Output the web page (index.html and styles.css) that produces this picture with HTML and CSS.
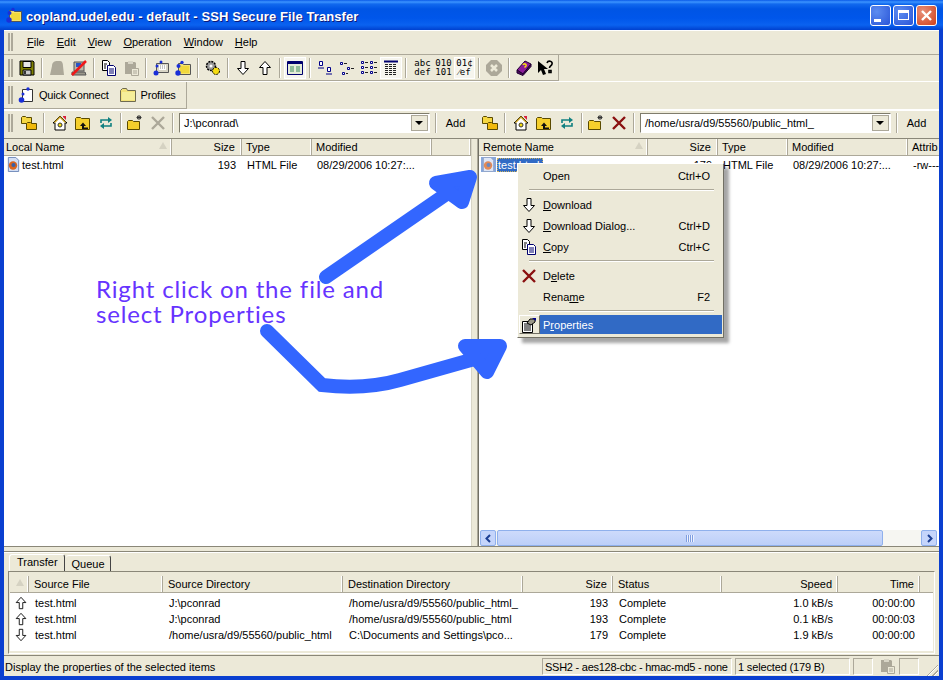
FILE: index.html
```html
<!DOCTYPE html>
<html lang="en">
<head>
    <meta charset="UTF-8">
    <title>copland.udel.edu - default - SSH Secure File Transfer</title>
    <link rel="stylesheet" href="styles.css">
</head>
<body>
    <svg class="defs" width="0" height="0">
        <defs>
            <symbol id="i-file" viewBox="0 0 16 16"><path d="M2.500.5h8l3 3v12h-11z" fill="#d3def4" stroke="#6d86b8"/><circle cx="7.500" cy="9" r="4.500" fill="#d9641f"/><circle cx="8" cy="8.500" r="2.200" fill="#3a5fa8"/></symbol>
            <symbol id="i-save" viewBox="0 0 16 16"><path d="M1 1h13l1 1v13H1z" fill="#808000" stroke="#000"/><path d="M4 1.500h8v6H4z" fill="#e8e8e8" stroke="#000"/><path d="M4 10h8v5H4z" fill="#c8c8c8" stroke="#000"/><path d="M5 11h2v3H5z" fill="#333"/></symbol>
            <symbol id="i-ghost" viewBox="0 0 16 16"><path d="M1 15 3 6c0-4 3-5 5-5h3c2 0 3 2 3 5l1 9z" fill="#aca899"/></symbol>
            <symbol id="i-disc" viewBox="0 0 16 16"><path d="M3 2h10v9H3z" fill="#b9b6a8" stroke="#555"/><path d="M5 3h5v4H5z" fill="#2a55c8"/><path d="M1 12h13l1 3H1z" fill="#9a978a" stroke="#555"/><path d="M1 15 15 1" stroke="#f01818" stroke-width="2.500"/></symbol>
            <symbol id="i-copy" viewBox="0 0 16 16"><path d="M1.500.5h5l2 2v8h-7z" fill="#fff" stroke="#000"/><path d="M6.500 5.500h6l2 2v8h-8z" fill="#fff" stroke="#00006e"/><path d="M3 4h3M3 6h2M3 8h2" stroke="#000"/><path d="M8 9h5M8 11h5M8 13h5" stroke="#00006e"/></symbol>
            <symbol id="i-paste" viewBox="0 0 16 16"><path d="M2 2h10l1 1v11H2z" fill="#aca899"/><path d="M5 1h5v3H5z" fill="#d8d5c6"/><path d="M8.500 8.500h7v7h-7z" fill="#ece9d8" stroke="#aca899"/><path d="M10 11h4M10 13h4" stroke="#aca899"/></symbol>
            <symbol id="i-term" viewBox="0 0 16 16"><path d="M3.500 3.500h12v9h-12z" fill="#d8d5c6" stroke="#555"/><path d="M6 5h7v5H6z" fill="#fff"/><path d="M7 6h1M9 6h1M11 6h1M7 8h1M9 8h1M11 8h1" stroke="#888"/><circle cx="3" cy="13" r="2.500" fill="#1a2fd8"/><circle cx="4" cy="6" r="1.500" fill="#1a2fd8"/><circle cx="8" cy="2" r="1.500" fill="#1a2fd8"/></symbol>
            <symbol id="i-prof" viewBox="0 0 16 16"><path d="M3.500 3.500h4l1 1h7v10h-12z" fill="#f6e36c" stroke="#555"/><path d="M5 6h9v7H5z" fill="#f1d83c"/><circle cx="3" cy="13" r="2.700" fill="#1a2fd8"/><circle cx="3.500" cy="6" r="2" fill="#1a2fd8"/><circle cx="7" cy="2.500" r="1.700" fill="#1a2fd8"/></symbol>
            <symbol id="i-gears" viewBox="0 0 16 16"><circle cx="6" cy="6" r="4.500" fill="#999" stroke="#000" stroke-width="1.500" stroke-dasharray="2 1"/><circle cx="6" cy="6" r="1.500" fill="#fff"/><circle cx="11" cy="11" r="3.500" fill="#f5dc10" stroke="#000" stroke-dasharray="2 1"/></symbol>
            <symbol id="i-down" viewBox="0 0 16 16"><path d="M6 1.500h4v7h3.500L8 14.500 2.500 8.500H6z" fill="#fff" stroke="#000"/></symbol>
            <symbol id="i-up" viewBox="0 0 16 16"><path d="M6 14.500h4v-7h3.500L8 1.500 2.500 7.500H6z" fill="#fff" stroke="#000"/></symbol>
            <symbol id="i-win" viewBox="0 0 16 16"><path d="M.5 1.500h15v13H.5z" fill="#e4ecd8" stroke="#00006e"/><path d="M1 2h14v2H1z" fill="#00006e"/><path d="M3 7h4M9 7h4M3 9h4M9 9h4M3 11h4M9 11h4" stroke="#3c8a5a"/></symbol>
            <symbol id="i-large" viewBox="0 0 16 16"><g fill="#fff" stroke="#00008a"><path d="M2.500 1.500h3v4h-3zM10.500 7.500h3v4h-3z"/></g><path d="M1 8h6M9 14h6" stroke="#00008a"/></symbol>
            <symbol id="i-small" viewBox="0 0 16 16"><g fill="#fff" stroke="#00008a"><path d="M1.500 2.500h2v2h-2zM8.500 7.500h2v2h-2zM3.500 12.500h2v2h-2z"/></g><path d="M5 3.500h3M12 8.500h3M7 13.500h2" stroke="#222"/></symbol>
            <symbol id="i-list" viewBox="0 0 16 16"><g fill="#fff" stroke="#00008a"><path d="M.5 1.500h2v2h-2zM9.500 1.500h2v2h-2zM.5 6.500h2v2h-2zM9.500 6.500h2v2h-2zM.5 11.500h2v2h-2zM9.500 11.500h2v2h-2z"/></g><path d="M4 2.500h3M13 2.500h3M4 7.500h3M13 7.500h3M4 12.500h3M13 12.500h3" stroke="#222"/></symbol>
            <symbol id="i-detail" viewBox="0 0 16 16"><path d="M1 1.500h14" stroke="#00006e" stroke-width="2"/><path d="M2 4.500h12M2 6.500h12M2 8.500h12M2 10.500h12M2 12.500h12M2 14.500h12" stroke="#222" stroke-dasharray="3 1"/></symbol>
            <symbol id="i-stop" viewBox="0 0 16 16"><path d="M5 0h6l5 5v6l-5 5H5l-5-5V5z" fill="#aca899"/><path d="m5 5 6 6m0-6-6 6" stroke="#ece9d8" stroke-width="2.500"/></symbol>
            <symbol id="i-book" viewBox="0 0 16 16"><path d="M1 10 9 1l6 3-8 10z" fill="#8a1a9a" stroke="#200030"/><path d="M1 10v3l6 2.500 8-9V4l-8 10z" fill="#4a0a5a" stroke="#200030"/><path d="M7 5c1-2 4-1 3 1L8.500 7.500" stroke="#f5dc10" stroke-width="1.500" fill="none"/></symbol>
            <symbol id="i-help" viewBox="0 0 16 16"><path d="M0 1v12l3-3 2 5 3-1-2-5h4z" fill="#000"/><path d="M9 3c1-3 6-2 5 1-.5 2-2.500 2-2.500 4M11 10.500h2v2h-2z" stroke="#000" stroke-width="1.600" fill="none"/></symbol>
            <symbol id="i-qc" viewBox="0 0 16 16"><path d="M4.500 2.500h10v12h-10z" fill="#fff" stroke="#333"/><circle cx="3.500" cy="13" r="2.800" fill="#1a2fd8"/><circle cx="5" cy="7" r="1.500" fill="#1a2fd8"/><circle cx="10" cy="2" r="1.700" fill="#1a2fd8"/></symbol>
            <symbol id="i-folder" viewBox="0 0 16 16"><path d="M.5 3.500l2-2h4l1 2h8v11H.5z" fill="#f3e27a" stroke="#6e6a50"/><path d="M2 5h13v8H2z" fill="#f5ee9a"/></symbol>
            <symbol id="i-sibling" viewBox="0 0 16 16"><path d="M.5 2.500l1-1h3l1 1h5v6h-10z" fill="#f5d742" stroke="#5a4a00"/><path d="M5.500 8.500l1-1h3l1 1h5v6h-10z" fill="#f0b90c" stroke="#5a4a00"/></symbol>
            <symbol id="i-home" viewBox="0 0 16 16"><path d="M8 1 1 8h2v7h10V8h2z" fill="#fff" stroke="#000"/><path d="M11 1h3v4l-3-3z" fill="#d8203c"/><path d="M8 1 2 7l1 1 5-5 5 5 1-1z" fill="#c8a020"/><circle cx="8" cy="10" r="2" fill="#f5dc10" stroke="#333"/></symbol>
            <symbol id="i-updir" viewBox="0 0 16 16"><path d="M.5 3.500l1-1h4l1 1h8v11H.5z" fill="#f5cf2c" stroke="#5a4a00"/><path d="M5 11 8 7.500 11 11H9v1.500h4V14H7v-3z" fill="#111"/></symbol>
            <symbol id="i-refresh" viewBox="0 0 16 16"><path d="M3 8V5h8" fill="none" stroke="#108080" stroke-width="1.600"/><path d="m10 2 4 3-4 3z" fill="#108080"/><path d="M13 8v3H5" fill="none" stroke="#108080" stroke-width="1.600"/><path d="m6 8-4 3 4 3z" fill="#108080"/></symbol>
            <symbol id="i-newdir" viewBox="0 0 16 16"><path d="M.5 6.500l1-1h4l1 1h6v8H.5z" fill="#f5cf2c" stroke="#5a4a00"/><path d="M12 0v5M9.500 2.500h5M10 1l4 3m0-3-4 3" stroke="#333"/></symbol>
            <symbol id="i-x" viewBox="0 0 16 16"><path d="m2 2 12 12m0-12L2 14" stroke="currentColor" stroke-width="2.400"/></symbol>
            <symbol id="i-props" viewBox="0 0 16 16"><path d="M1.500 4.500h10v11h-10z" fill="#fff" stroke="#000"/><path d="M3 7h7M3 9h7M3 11h7M3 13h7" stroke="#000"/><path d="M6 6 9 2h5v3l-4 3z" fill="#9a9788" stroke="#000"/><path d="M11 1h4v3z" fill="#00008a"/></symbol>
        </defs>
    </svg>

    <div class="window">
        <header class="titlebar">
            <svg class="title-icon"><use href="#i-prof"/></svg>
            <span class="title-text">copland.udel.edu - default - SSH Secure File Transfer</span>
            <span class="capbtn"><i class="cap-min"></i></span>
            <span class="capbtn"><i class="cap-max"></i></span>
            <span class="capbtn close"><svg width="13" height="13" viewBox="0 0 13 13"><path d="m2 2 9 9m0-9-9 9" stroke="#fff" stroke-width="2.400"/></svg></span>
        </header>

        <div class="app">
            <nav class="band menubar">
                <i class="grip"></i>
                <span class="menu-item"><u>F</u>ile</span>
                <span class="menu-item"><u>E</u>dit</span>
                <span class="menu-item"><u>V</u>iew</span>
                <span class="menu-item"><u>O</u>peration</span>
                <span class="menu-item"><u>W</u>indow</span>
                <span class="menu-item"><u>H</u>elp</span>
            </nav>

            <div class="band toolband first">
                <div class="toolbar main-tools">
                    <i class="grip"></i>
                    <span class="tool"><svg><use href="#i-save"/></svg></span>
                    <i class="sep"></i>
                    <span class="tool"><svg><use href="#i-ghost"/></svg></span>
                    <span class="tool"><svg><use href="#i-disc"/></svg></span>
                    <i class="sep"></i>
                    <span class="tool"><svg><use href="#i-copy"/></svg></span>
                    <span class="tool"><svg><use href="#i-paste"/></svg></span>
                    <i class="sep"></i>
                    <span class="tool"><svg><use href="#i-term"/></svg></span>
                    <span class="tool"><svg><use href="#i-prof"/></svg></span>
                    <i class="sep"></i>
                    <span class="tool"><svg><use href="#i-gears"/></svg></span>
                    <i class="sep"></i>
                    <span class="tool"><svg><use href="#i-down"/></svg></span>
                    <span class="tool"><svg><use href="#i-up"/></svg></span>
                    <i class="sep"></i>
                    <span class="tool pressed"><svg><use href="#i-win"/></svg></span>
                    <i class="sep"></i>
                    <span class="tool"><svg><use href="#i-large"/></svg></span>
                    <span class="tool"><svg><use href="#i-small"/></svg></span>
                    <span class="tool"><svg><use href="#i-list"/></svg></span>
                    <span class="tool pressed"><svg><use href="#i-detail"/></svg></span>
                    <i class="sep wide"></i>
                    <span class="tool mode">abc<br>def</span>
                    <span class="tool mode">010<br>101</span>
                    <span class="tool mode pressed">01¢<br>⁄ef</span>
                    <i class="sep"></i>
                    <span class="tool"><svg><use href="#i-stop"/></svg></span>
                    <i class="sep"></i>
                    <span class="tool"><svg><use href="#i-book"/></svg></span>
                    <span class="tool"><svg><use href="#i-help"/></svg></span>
                </div>
            </div>

            <div class="band toolband">
                <div class="toolbar connect-tools">
                    <i class="grip"></i>
                    <span class="text-tool"><svg><use href="#i-qc"/></svg>Quick Connect</span>
                    <span class="text-tool"><svg><use href="#i-folder"/></svg>Profiles</span>
                </div>
            </div>

            <div class="band pathband">
                <div class="pathbar">
                    <i class="grip"></i>
                    <span class="tool"><svg><use href="#i-sibling"/></svg></span>
                    <i class="sep"></i>
                    <span class="tool"><svg><use href="#i-home"/></svg></span>
                    <span class="tool"><svg><use href="#i-updir"/></svg></span>
                    <span class="tool"><svg><use href="#i-refresh"/></svg></span>
                    <i class="sep tight"></i>
                    <span class="tool"><svg><use href="#i-newdir"/></svg></span>
                    <span class="tool off"><svg><use href="#i-x"/></svg></span>
                    <i class="sep"></i>
                    <span class="combo"><span class="combo-text">J:\pconrad\</span><span class="combo-btn"></span></span>
                    <i class="sep"></i>
                    <span class="add">Add</span>
                </div>
                <div class="pathbar remote">
                    <span class="tool"><svg><use href="#i-sibling"/></svg></span>
                    <i class="sep"></i>
                    <span class="tool"><svg><use href="#i-home"/></svg></span>
                    <span class="tool"><svg><use href="#i-updir"/></svg></span>
                    <span class="tool"><svg><use href="#i-refresh"/></svg></span>
                    <i class="sep tight"></i>
                    <span class="tool"><svg><use href="#i-newdir"/></svg></span>
                    <span class="tool del"><svg><use href="#i-x"/></svg></span>
                    <i class="sep"></i>
                    <span class="combo"><span class="combo-text">/home/usra/d9/55560/public_html_</span><span class="combo-btn"></span></span>
                    <i class="sep"></i>
                    <span class="add">Add</span>
                </div>
            </div>

            <main class="panes">
                <section class="pane local">
                    <div class="grid-row head">
                        <span class="sortable">Local Name<i class="sort"></i></span>
                        <span class="num">Size</span>
                        <span>Type</span>
                        <span>Modified</span>
                        <span></span>
                    </div>
                    <div class="list">
                        <div class="grid-row row">
                            <span class="name"><svg class="ficon"><use href="#i-file"/></svg>test.html</span>
                            <span class="num">193</span>
                            <span>HTML File</span>
                            <span>08/29/2006 10:27:...</span>
                            <span></span>
                        </div>
                    </div>
                </section>
                <section class="pane remote-pane">
                    <div class="grid-row head">
                        <span class="sortable">Remote Name<i class="sort"></i></span>
                        <span class="num">Size</span>
                        <span>Type</span>
                        <span>Modified</span>
                        <span>Attrib</span>
                    </div>
                    <div class="list">
                        <div class="grid-row row">
                            <span class="name selected"><svg class="ficon"><use href="#i-file"/></svg><b>test.html</b></span>
                            <span class="num">179</span>
                            <span>HTML File</span>
                            <span>08/29/2006 10:27:...</span>
                            <span>-rw---</span>
                        </div>
                    </div>
                    <div class="hscroll">
                        <span class="sb-btn">
                            <svg width="9" height="9" viewBox="0 0 9 9"><path d="M6 1 2.500 4.500 6 8" fill="none" stroke="#1c3f94" stroke-width="2"/></svg>
                        </span>
                        <span class="sb-thumb"><i></i></span>
                        <span class="sb-btn">
                            <svg width="9" height="9" viewBox="0 0 9 9"><path d="M3 1l3.500 3.500L3 8" fill="none" stroke="#1c3f94" stroke-width="2"/></svg>
                        </span>
                    </div>
                </section>
            </main>

            <section class="transfers">
                <div class="tabs">
                    <span class="tab active">Transfer</span>
                    <span class="tab">Queue</span>
                </div>
                <div class="transfer-box">
                    <div class="t-row t-head">
                        <span class="sort-cell"><i class="sort"></i></span>
                        <span>Source File</span>
                        <span>Source Directory</span>
                        <span>Destination Directory</span>
                        <span class="num">Size</span>
                        <span>Status</span>
                        <span class="num">Speed</span>
                        <span class="num">Time</span>
                        <span></span>
                    </div>
                    <div class="t-body">
                        <div class="t-row">
                            <span class="dir"><svg><use href="#i-up"/></svg></span>
                            <span>test.html</span>
                            <span>J:\pconrad</span>
                            <span>/home/usra/d9/55560/public_html_</span>
                            <span class="num">193</span>
                            <span>Complete</span>
                            <span class="num">1.0 kB/s</span>
                            <span class="num">00:00:00</span>
                            <span></span>
                        </div>
                        <div class="t-row">
                            <span class="dir"><svg><use href="#i-up"/></svg></span>
                            <span>test.html</span>
                            <span>J:\pconrad</span>
                            <span>/home/usra/d9/55560/public_html</span>
                            <span class="num">193</span>
                            <span>Complete</span>
                            <span class="num">0.1 kB/s</span>
                            <span class="num">00:00:03</span>
                            <span></span>
                        </div>
                        <div class="t-row">
                            <span class="dir"><svg><use href="#i-down"/></svg></span>
                            <span>test.html</span>
                            <span>/home/usra/d9/55560/public_html</span>
                            <span>C:\Documents and Settings\pco...</span>
                            <span class="num">179</span>
                            <span>Complete</span>
                            <span class="num">1.9 kB/s</span>
                            <span class="num">00:00:00</span>
                            <span></span>
                        </div>
                    </div>
                </div>
            </section>

            <footer class="statusbar">
                <span class="st-msg">Display the properties of the selected items</span>
                <span class="st-cell st-cipher">SSH2 - aes128-cbc - hmac-md5 - none</span>
                <span class="st-cell st-sel">1 selected (179 B)</span>
                <span class="st-cell st-small"></span>
                <span class="st-lock"><svg width="16" height="16"><use href="#i-paste"/></svg></span>
                <span class="st-cell st-small"></span>
                <span class="st-grip"></span>
            </footer>
        </div>
    </div>

    <!-- dibujado encima de la captura -->
    <svg class="arrows" width="943" height="680" viewBox="0 0 943 680">
        <path d="M326 277 458 186" fill="none" stroke="#3366ff" stroke-width="14" stroke-linecap="round"/>
        <path d="M436 183 470 177 462 202z" fill="#3366ff" stroke="#3366ff" stroke-width="14" stroke-linejoin="round" stroke-linecap="round"/>
        <path d="M267 331 322 385Q365 390 400 380L485 356" fill="none" stroke="#3366ff" stroke-width="14" stroke-linecap="round"/>
        <path d="M465 346H500L487 372z" fill="#3366ff" stroke="#3366ff" stroke-width="14" stroke-linejoin="round"/>
    </svg>
    <p class="note">Right click on the file and<br>select Properties</p>

    <div class="context">
        <div class="ctx-item"><span class="ctx-icon"></span><span class="ctx-label">Open</span><span>Ctrl+O</span></div>
        <i class="ctx-sep"></i>
        <div class="ctx-item"><span class="ctx-icon"><svg><use href="#i-down"/></svg></span><span class="ctx-label"><u>D</u>ownload</span></div>
        <div class="ctx-item"><span class="ctx-icon"><svg><use href="#i-down"/></svg></span><span class="ctx-label"><u>D</u>ownload Dialog...</span><span>Ctrl+D</span></div>
        <div class="ctx-item"><span class="ctx-icon"><svg><use href="#i-copy"/></svg></span><span class="ctx-label"><u>C</u>opy</span><span>Ctrl+C</span></div>
        <i class="ctx-sep"></i>
        <div class="ctx-item"><span class="ctx-icon del"><svg><use href="#i-x"/></svg></span><span class="ctx-label">D<u>e</u>lete</span></div>
        <div class="ctx-item"><span class="ctx-icon"></span><span class="ctx-label">Rena<u>m</u>e</span><span>F2</span></div>
        <i class="ctx-sep"></i>
        <div class="ctx-item current"><span class="ctx-icon raised"><svg><use href="#i-props"/></svg></span><span class="ctx-label">P<u>r</u>operties</span></div>
    </div>
</body>
</html>
```

FILE: styles.css
```css
* {
    box-sizing: border-box;
}

body {
    margin: 0;
    width: 943px;
    height: 680px;
    overflow: hidden;
    position: relative;
    font-family: "Liberation Sans", Arial, sans-serif;
    font-size: 11px;
    color: #000;
    background: #ece9d8;
}

i {
    display: block;
    font-style: normal;
}

.defs {
    position: absolute;
}

.window {
    height: 680px;
    display: flex;
    flex-direction: column;
    background: #0a3fd0;
}

.titlebar {
    height: 30px;
    flex: none;
    display: flex;
    align-items: center;
    padding: 0 6px 0 6px;
    gap: 2px;
    background: linear-gradient(#0a5ae8 0, #3c94ff 2px, #1169ee 4px, #0055e5 9px, #0056ea 18px, #0a62f0 25px, #0041cf 30px);
}

.title-icon {
    width: 16px;
    height: 16px;
    margin-right: 2px;
}

.title-text {
    flex: 1;
    padding-top: 2px;
    color: #fff;
    font-size: 13px;
    font-weight: bold;
    letter-spacing: .1px;
    text-shadow: 1px 1px #0f1a7a;
}

.capbtn {
    width: 21px;
    height: 21px;
    border: 1px solid #fff;
    border-radius: 3px;
    display: flex;
    align-items: center;
    justify-content: center;
    background: radial-gradient(circle at 30% 30%, #5c8cf0, #2a55d8);
}

.capbtn.close {
    background: radial-gradient(circle at 30% 30%, #e8907a, #d0401a);
}

.cap-min {
    width: 7px;
    height: 3px;
    background: #fff;
    margin: 10px 7px 0 0;
}

.cap-max {
    width: 11px;
    height: 10px;
    border: 1px solid #fff;
    border-top-width: 3px;
}

.app {
    flex: 1;
    margin: 0 4px 4px;
    min-height: 0;
    display: flex;
    flex-direction: column;
    background: #ece9d8;
}

.band {
    flex: none;
    display: flex;
    border-bottom: 1px solid #aca899;
    border-top: 1px solid #fff;
}

.menubar {
    height: 25px;
    align-items: center;
    gap: 12px;
    padding: 0 0 2px 4px;
}

.menubar .grip {
    margin-right: 2px;
}

.grip {
    flex: none;
    width: 5px;
    height: 18px;
    border-left: 2px solid #aca899;
    border-right: 2px solid #aca899;
}

.sep {
    flex: none;
    width: 2px;
    height: 20px;
    margin: 0 3px;
    border-left: 1px solid #aca899;
    border-right: 1px solid #fff;
}

.sep.wide {
    margin-right: 5px;
}

.sep.tight {
    margin-right: 1px;
}

.toolband {
    height: 28px;
    border-top: 0;
    border-bottom: 1px solid #fff;
}

.toolband.first {
    height: 27px;
}

.toolbar {
    display: flex;
    align-items: center;
    padding-left: 4px;
    border-right: 1px solid #aca899;
    border-bottom: 1px solid #aca899;
}

.main-tools {
    width: 555px;
}

.main-tools .grip {
    margin-right: 3px;
}

.connect-tools {
    width: 183px;
}

.connect-tools .grip {
    margin-right: 5px;
}

.tool {
    flex: none;
    width: 22px;
    height: 22px;
    display: flex;
    align-items: center;
    justify-content: center;
}

.tool svg {
    width: 16px;
    height: 16px;
}

.tool.pressed {
    background: #f6f5ee;
    outline: 1px solid #fff;
    outline-offset: -1px;
}

.tool.off {
    color: #aca899;
}

.tool.del {
    color: #8a1010;
}

.tool.mode {
    width: 21px;
    font-family: "DejaVu Sans Mono", monospace;
    font-size: 9px;
    line-height: 9px;
    text-align: center;
    display: block;
    padding-top: 2px;
}

.text-tool {
    display: flex;
    align-items: center;
    gap: 5px;
    height: 22px;
    margin-right: 11px;
    white-space: nowrap;
    letter-spacing: -.2px;
}

.text-tool svg {
    width: 16px;
    height: 16px;
}

.pathband {
    height: 29px;
    gap: 2px;
    border-bottom: 1px solid #8a8778;
}

.pathbar {
    flex: none;
    width: 470px;
    display: flex;
    align-items: center;
    padding: 0 0 3px 4px;
}

.pathbar .tool {
    width: 23px;
}

.pathbar .grip {
    margin-right: 4px;
}

.pathbar.remote {
    width: 463px;
    padding-left: 2px;
}

.combo {
    flex: none;
    width: 251px;
    height: 20px;
    display: flex;
    align-items: center;
    background: #fff;
    border: 1px solid #7f7c6c;
    border-right-color: #fff;
    border-bottom-color: #fff;
    padding: 1px;
    margin: 0 2px;
}

.combo-text {
    flex: 1;
    padding-left: 3px;
    white-space: nowrap;
}

.combo-btn {
    width: 17px;
    height: 16px;
    background: #ece9d8;
    border: 1px solid #aca899;
    position: relative;
}

.combo-btn::after {
    content: "";
    position: absolute;
    left: 3px;
    top: 5px;
    border-left: 4px solid transparent;
    border-right: 4px solid transparent;
    border-top: 4px solid #000;
}

.add {
    width: 31px;
    text-align: center;
}

.panes {
    flex: 1;
    min-height: 0;
    display: flex;
    gap: 6px;
    border-bottom: 1px solid #8a8778;
}

.pane {
    display: flex;
    flex-direction: column;
    min-width: 0;
    background: #fff;
}

.pane.local {
    width: 468px;
    border-right: 1px solid #d8d5c6;
}

.pane.remote-pane {
    flex: 1;
    border-left: 1px solid #716f64;
    box-shadow: -1px 0 #aca899;
}

.grid-row {
    display: grid;
    align-items: center;
    white-space: nowrap;
}

.local .grid-row {
    grid-template-columns: 168px 70px 70px 120px 1fr;
}

.remote-pane .grid-row {
    grid-template-columns: 169px 70px 70px 120px 1fr;
}

.head {
    height: 17px;
    flex: none;
    background: #ece9d8;
    border-bottom: 1px solid #aca899;
}

.head span {
    height: 16px;
    line-height: 17px;
    padding: 0 4px;
    position: relative;
    border-right: 1px solid #aca899;
    box-shadow: inset -1px 0 #fff;
    overflow: hidden;
}

.local .head .sortable {
    padding-left: 2px;
}

.remote-pane .head span:last-child {
    border-right: 0;
    box-shadow: none;
}

.head .num {
    padding-right: 6px;
}

.num {
    text-align: right;
}

.sort {
    position: absolute;
    right: 4px;
    top: 3px;
    width: 0;
    height: 0;
    border-left: 4px solid transparent;
    border-right: 4px solid transparent;
    border-bottom: 7px solid #d5d2c2;
}

.list {
    flex: 1;
    min-height: 0;
}

.row {
    height: 17px;
}

.row span {
    padding-left: 5px;
    overflow: hidden;
}

.row .num {
    padding-right: 6px;
    padding-left: 0;
}

.row .name {
    display: flex;
    align-items: center;
    padding-left: 2px;
}

.ficon {
    width: 15px;
    height: 15px;
    margin-right: 1px;
    flex: none;
}

.selected .ficon {
    background: #5f8ad0;
    opacity: .75;
}

.selected b {
    font-weight: normal;
    color: #fff;
    background: #316ac5;
    outline: 1px dotted #c9b060;
    outline-offset: -1px;
    padding: 1px 3px 1px 1px;
}

.hscroll {
    height: 16px;
    flex: none;
    display: flex;
    margin: 0 2px 0 1px;
    background: #f6f6f2;
}

.sb-btn {
    width: 16px;
    height: 16px;
    flex: none;
    display: flex;
    align-items: center;
    justify-content: center;
    background: #c5d5fb;
    border: 1px solid #8fb0ec;
    border-radius: 2px;
}

.sb-thumb {
    width: 386px;
    margin: 0 38px 0 1px;
    background: linear-gradient(#cddafb, #bccff8);
    border: 1px solid #8fb0ec;
    border-radius: 2px;
    display: flex;
    align-items: center;
    justify-content: center;
}

.sb-thumb i {
    width: 8px;
    height: 7px;
    background: repeating-linear-gradient(90deg, #7f9ee0 0 1px, #eef2ff 1px 2px);
}

.transfers {
    flex: none;
    height: 105px;
    margin-top: 4px;
    display: flex;
    flex-direction: column;
    padding: 0 4px;
    border-top: 1px solid #8a8778;
    box-shadow: inset 0 1px #fff;
    border-bottom: 1px solid #8a8778;
}

.tabs {
    height: 19px;
    flex: none;
    display: flex;
    align-items: flex-end;
    padding-left: 1px;
    gap: 1px;
}

.tab {
    height: 16px;
    line-height: 16px;
    padding: 0 5px 0 6px;
    border-right: 1px solid #444;
    border-top: 1px solid #fff;
    border-radius: 3px 3px 0 0;
}

.tab.active {
    height: 17px;
    line-height: 15px;
    padding: 0 6px 0 7px;
    border-left: 1px solid #fff;
}

.transfer-box {
    flex: 1;
    display: flex;
    flex-direction: column;
    margin-bottom: 1px;
    border: 1px solid #8a8778;
    border-right-color: #fff;
    border-bottom-color: #fff;
    padding: 4px 1px 2px;
}

.t-row {
    display: grid;
    grid-template-columns: 19px 134px 180px 180px 90px 109px 116px 82px 13px;
    align-items: center;
    height: 16px;
    white-space: nowrap;
}

.t-head {
    height: 17px;
    flex: none;
    border-bottom: 1px solid #aca899;
}

.t-head span {
    height: 16px;
    line-height: 17px;
    padding: 0 4px 0 5px;
    position: relative;
    border-right: 1px solid #aca899;
    box-shadow: inset -1px 0 #fff;
}

.t-head span:last-child {
    border-right: 0;
    box-shadow: none;
}

.t-head .num {
    padding-right: 5px;
}

.t-body {
    flex: 1;
    padding-top: 2px;
    background: #fff;
}

.t-body span {
    padding-left: 6px;
    overflow: hidden;
}

.t-body .num {
    padding: 0 5px 0 0;
}

.t-body .dir {
    padding-left: 4px;
    display: flex;
}

.dir svg {
    width: 14px;
    height: 14px;
}

.statusbar {
    flex: none;
    height: 20px;
    display: flex;
    align-items: center;
    padding-top: 1px;
}

.st-msg {
    width: 538px;
    padding-left: 1px;
}

.st-cell {
    height: 17px;
    line-height: 16px;
    padding-left: 2px;
    border: 1px solid #aca899;
    border-right-color: #fff;
    border-bottom-color: #fff;
    white-space: nowrap;
    margin-right: 3px;
}

.st-cipher {
    width: 190px;
    letter-spacing: -.25px;
}

.st-sel {
    width: 115px;
    letter-spacing: -.15px;
}

.st-small {
    width: 20px;
}

.st-lock {
    width: 22px;
    height: 17px;
    display: flex;
    justify-content: center;
    margin-right: 1px;
}

.st-grip {
    flex: none;
    width: 13px;
    height: 13px;
    margin-left: auto;
    margin-right: 1px;
    align-self: flex-end;
    background: repeating-linear-gradient(135deg, transparent 0 2px, #aca899 2px 3px, #fff 3px 4px);
    clip-path: polygon(100% 0, 100% 100%, 0 100%);
}

.arrows {
    position: absolute;
    left: 0;
    top: 0;
    pointer-events: none;
}

.note {
    position: absolute;
    left: 96px;
    top: 276px;
    margin: 0;
    color: #6633ff;
    font-family: Lato, sans-serif;
    font-size: 24px;
    line-height: 25px;
    letter-spacing: .85px;
    white-space: nowrap;
}

.context {
    position: absolute;
    left: 517px;
    top: 163px;
    width: 207px;
    height: 175px;
    padding: 1px 1px 2px;
    background: #ece9d8;
    border: 1px solid #fff;
    border-right-color: #716f64;
    border-bottom-color: #716f64;
    box-shadow: 5px 5px 3px rgba(0, 0, 0, .35);
}

.ctx-item {
    height: 21px;
    display: flex;
    align-items: center;
    padding-right: 12px;
}

.ctx-icon {
    width: 24px;
    height: 21px;
    flex: none;
    display: flex;
    align-items: center;
    padding-left: 2px;
}

.ctx-icon svg {
    width: 16px;
    height: 16px;
}

.ctx-icon.del {
    color: #8a1010;
}

.ctx-label {
    flex: 1;
}

.ctx-sep {
    height: 2px;
    margin: 3px 8px 3px 10px;
    border-top: 1px solid #aca899;
    border-bottom: 1px solid #fff;
}

.current {
    height: 19px;
    margin-top: 1px;
    color: #fff;
    padding-right: 0;
    background: linear-gradient(90deg, #ece9d8 21px, #316ac5 21px);
}

.ctx-icon.raised {
    width: 21px;
    height: 19px;
    margin-right: 3px;
    padding-left: 1px;
    color: #000;
    border: 1px solid #fff;
    border-right-color: #716f64;
    border-bottom-color: #716f64;
}
```
